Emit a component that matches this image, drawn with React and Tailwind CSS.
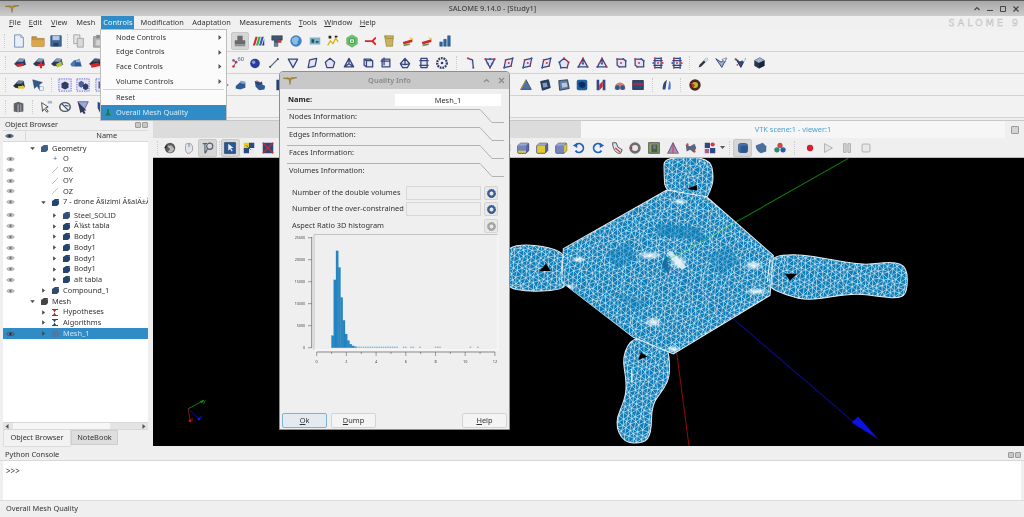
import React from "react";

const Logo = () => (
  <svg width="14" height="8" viewBox="0 0 14 8"><path d="M0 1.2 L6 2.2 L7 7.5 L8 2.2 L14 .6 L8.5 .6 L7 1.5 L5 .8z" fill="#b8942c" stroke="#6b5a20" strokeWidth=".4"/></svg>
);
const S = ({ children }) => <svg viewBox="0 0 16 16" width="14" height="14">{children}</svg>;
const poly = (d, dots) => (
  <svg viewBox="-1 -1 18 18" width="14" height="14">
    <path d={d} fill="#d6daee" fillOpacity=".55" stroke="#36457e" strokeWidth="1.6" strokeLinejoin="round"/>
    {dots && dots.map((p, i) => <circle key={i} cx={p[0]} cy={p[1]} r="1.3" fill={i % 2 ? "#3f55b4" : "#d8344a"}/>)}
  </svg>
);
const cube = (a, b, c, extra) => (
  <S>
    <path d="M3 5 L9 2 L14 5 L14 11 L8 14 L3 11z" fill={a} stroke="#2a3346" strokeWidth=".7"/>
    <path d="M3 5 L8 8 L14 5 L9 2z" fill={b}/>
    <path d="M8 8 L8 14 L14 11 L14 5z" fill={c}/>
    {extra}
  </S>
);
const house = (extra, top = "#7ea0c8", body = "#243c62") => (
  <S>
    <path d="M1.5 9 L7.5 3 L13 3.5 L14.5 10 L8 11.5 L4 11z" fill={body} stroke="#18263e" strokeWidth=".4"/>
    <path d="M5 6.5 L7.5 3 L13 3.5 L11.5 6.5z" fill={top}/>
    {extra}
  </S>
);
const face = (kind) => (
  <S>
    <path d="M5 2.5h8.5a1 1 0 0 1 1 1v7.5l-3 3H3a1 1 0 0 1-1-1V5.5z" fill="#5a68a8" stroke="#2a3058" strokeWidth=".8"/>
    <path d="M2.4 5.5h9v8h-9z" fill={kind === "f" ? "#e2c92c" : "#7684bc"}/>
    {kind === "b" && <path d="M2.4 11h9v2.5h-9z" fill="#e2c92c"/>}
    {kind === "r" && <path d="M11.5 5.5l3-2.5v8l-3 2.5z" fill="#e2c92c"/>}
    {kind === "l" && <path d="M2.4 5.5h4v8h-4z" fill="#e2c92c"/>}
    <path d="M5 2.5h9l-3 3H2z" fill="#9aa6d4"/>
  </S>
);
const dash = (inner) => (
  <S>
    <rect x="1" y="1" width="14" height="14" fill="#e4e4f6" stroke="#5a5fc8" strokeWidth="1" strokeDasharray="1.5 1.2"/>
    {inner}
  </S>
);
const ICONS = {
  doc: <S><path d="M3 1h7l3 3v11H3z" fill="#e8effa" stroke="#6f86a8"/><path d="M10 1v3h3" fill="#c6d2e6" stroke="#6f86a8" strokeWidth=".6"/></S>,
  folder: <S><path d="M1 3h5l1 2h8v9H1z" fill="#c9923c" stroke="#a97a2e" strokeWidth=".8"/><path d="M1 7h14v7H1z" fill="#dba650"/></S>,
  save: <S><path d="M2 2h12v12H2z" fill="#41689f" stroke="#2b4776" strokeWidth=".8"/><path d="M4 2h8v5H4z" fill="#b8c8de"/><path d="M5 10h6v4H5z" fill="#26406b"/></S>,
  copy: <S><path d="M2 1h7v10H2z" fill="#e4e4e4" stroke="#a0a0a0"/><path d="M6 5h7v10H6z" fill="#d8d8d8" stroke="#a0a0a0"/></S>,
  paste: <S><path d="M3 3h10v12H3z" fill="#b4b4b4" stroke="#8b8b8b"/><path d="M6 1h4v4H6z" fill="#8a8a8a"/><path d="M6 7h6v6H6z" fill="#d4d4d4"/></S>,
  shade: <S><path d="M5 2h6v5h3v5H2V7h3z" fill="#6a6a6a"/><path d="M2 12h12v2H2z" fill="#8d8d8d"/></S>,
  rainbow: <S><path d="M1 13L4 3h2.5l-3 10z" fill="#d8252c"/><path d="M4.5 13L7.5 3H10L7 13z" fill="#3aa83c"/><path d="M8 13L11 3h2.5l-3 10z" fill="#2f56c8"/><path d="M11.5 13L14 5v8z" fill="#24358c"/></S>,
  blocks: <S><path d="M2 2h12v5H9v7H5V7H2z" fill="#3c5570" stroke="#222f40" strokeWidth=".6"/><path d="M9 7h4v3H9z" fill="#b43838"/><path d="M5 10h4v4H5z" fill="#6a7f96"/></S>,
  globe: <S><circle cx="8" cy="8" r="6.5" fill="#3c83c6"/><path d="M4 5c3-3 6-2 7 0s-2 3-1 5-4 3-5 1-3-4-1-6z" fill="#8fbbe2"/></S>,
  boxsm: <S><path d="M2 4h12v8H2z" fill="#7fb2c6"/><path d="M4 6h3v4H4zM9 8h3v2H9z" fill="#1e5068"/></S>,
  graph: <S><path d="M2 13l3-5 3 3 3-6 3 4" fill="none" stroke="#d6b818" strokeWidth="1.6"/><path d="M3 2h3v3H3zM10 2h3v2h-3z" fill="#222"/></S>,
  green: <S><path d="M8 1l6 3.5v7L8 15l-6-3.5v-7z" fill="#6cc46c" stroke="#3c9c4c" strokeWidth=".6"/><path d="M5 5.5h6v5H5z" fill="#e8f4e8" stroke="#2f8c3c"/><path d="M7 7h2v2H7z" fill="#5bb85b"/></S>,
  red: <S><path d="M1 7h8l4-4 1 2-3 3 3 3-1 2-4-4H1z" fill="#e0202c"/></S>,
  scroll: <S><path d="M3 2h10l-1 12H5z" fill="#c8b45a" stroke="#8e7b2c" strokeWidth=".7"/><path d="M3 2l2 3h8" fill="none" stroke="#8e7b2c" strokeWidth=".7"/></S>,
  flag: <S><path d="M2 9l11-3v3L3 12z" fill="#c82a30"/><path d="M10 3l2 2 2-1-1 2-3-1z" fill="#e6c62c"/><path d="M3 12l7-1.5v2L3 14z" fill="#7a8a4a"/></S>,
  bars: <S><path d="M2 9h3v5H2zM6.5 6h3v8h-3zM11 2h3v12h-3z" fill="#2f67a8" stroke="#1f4474" strokeWidth=".5"/></S>,
  a1: house(<path d="M4 9.5l8-1.5 .5 3-8 1.5z" fill="#d8252c"/>),
  a2: house(<path d="M9 6.5h2.5V9H14v2.5h-2.5V14H9v-2.5H6.5V9H9z" fill="#d8252c"/>),
  a3: house(<path d="M7 9l6-3 1 5-6 2z" fill="#b8c428"/>),
  a4: <S><path d="M1.5 9L6 4.5l2 1V12H3z" fill="#4a78b0"/><path d="M7 5l5-2 2.5 9-7.5 0z" fill="#2f5a94"/><path d="M8 4.5L12 3l1 4-5 0z" fill="#8fb2d8"/></S>,
  a5: house(<path d="M3 9l9-1.5 2 4-10 2z" fill="#d8252c"/>, "#4a5f7c", "#1d2c44"),
  num: <S><circle cx="4" cy="12" r="1.5" fill="#d8344a"/><circle cx="7" cy="7" r="1.5" fill="#d8344a"/><circle cx="4" cy="5" r="1.5" fill="#8a5ab0"/><path d="M4 12L7 7 4 5" stroke="#555" fill="none"/><text x="8.5" y="6" fontSize="6.5" fill="#3a4a9a" fontFamily="Noto Sans">60</text></S>,
  sphere: <S><circle cx="8" cy="8.5" r="5.5" fill="#2a3c9c"/><circle cx="6.5" cy="7" r="2" fill="#8a9cdc"/></S>,
  line: <S><path d="M3 13L13 3" stroke="#5a6d88" strokeWidth="1.6"/><path d="M3 13l1-1M12 4l1-1" stroke="#222" strokeWidth="1.8"/></S>,
  tri: poly("M2 3h12L8 14z"),
  quad: poly("M5 4l9-2-2 10-9 2z"),
  pent: poly("M8 2l6 5-2 7H4L2 7z"),
  tet: poly("M8 2l6 11H2zM8 2v7M2 13l6-4 6 4"),
  hex1: poly("M3 3h8l3 2v8H6l-3-2zM3 3l3 2h8M6 5v8"),
  hex2: poly("M3 3h10v10H3zM5.5 1v10M1 5.5h12"),
  prism: poly("M8 2l6 7-3 5H5L2 9zM8 2v8M2 9l6 1 6-1"),
  barrel: poly("M4 2h8v12H4zM2 5h12M2 11h12"),
  gear: <S><circle cx="8" cy="8" r="5.5" fill="none" stroke="#2f3c6e" strokeWidth="2.6" strokeDasharray="2 1"/><circle cx="8" cy="8" r="1.5" fill="#2f3c6e"/></S>,
  d1: poly("M4 2l6 2 1 10", [[4, 2], [11, 14]]),
  d2: poly("M2 3h12L8 14z", [[2, 3], [8, 3], [14, 3], [11, 8.5], [8, 14], [5, 8.5]]),
  d3: poly("M5 4l9-2-2 10-9 2z", [[5, 4], [14, 2], [12, 12], [3, 14], [9, 8]]),
  d4: poly("M8 2l6 5-2 7H4L2 7z", [[8, 2], [2, 7], [14, 7], [4, 14], [12, 14]]),
  d5: poly("M8 2l6 11H2zM8 2v7", [[8, 2], [2, 13], [14, 13], [8, 9], [5, 8]]),
  d6: poly("M3 3h8l3 2v8H6l-3-2z", [[3, 3], [14, 5], [6, 13], [11, 3], [8, 8]]),
  d7: poly("M4 2h8v12H4zM2 5h12M2 11h12", [[4, 2], [12, 2], [4, 14], [12, 14], [8, 8], [2, 8], [14, 8]]),
  pen: <S><path d="M3 13l3-1 8-8-2-2-8 8z" fill="#2c3644"/><path d="M12 2l2 2-3 3-2-2z" fill="#d8dce2"/></S>,
  v1: <S><path d="M2 3l6 4 6-4-5 10z" fill="#9aaed0" stroke="#2f3c6e"/><path d="M9 4l5-2-1 5z" fill="#e8ecf4" stroke="#2f3c6e" strokeWidth=".5"/></S>,
  v2: <S><path d="M3 3l5 4 6-4-5 10z" fill="#2f4a86" stroke="#1f2c50"/><circle cx="3" cy="4" r="1.2" fill="#d8344a"/><circle cx="5" cy="10" r="1" fill="#d8344a"/><path d="M9 4l5-2-1 5z" fill="#e8ecf4"/></S>,
  v3: cube("#27384e", "#9fb3cc", "#1a2536"),
  m1: house(<path d="M7 9h5l-1-2 4 3.5-4 3.5 1-2H7z" fill="#e2c92c"/>, "#6a7f9c", "#1d2c44"),
  m2: <S><path d="M2 2l11 3-4 3 3 5-2 1-3-5-3 3z" fill="#2f5a8c" stroke="#1c3658" strokeWidth=".5"/><rect x="10" y="10" width="4.5" height="4.5" fill="#eef2f8" stroke="#8a98b0" strokeWidth=".6"/></S>,
  m3: dash(<path d="M4 6l4-2 4 2v5l-4 2-4-2z" fill="#2e4062"/>),
  m4: dash(<g><path d="M3 5l3-2 3 2v4l-3 2-3-2z" fill="#4a5fa0"/><path d="M8 8l3-2 3 2v4l-3 2-3-2z" fill="#2e4062"/></g>),
  tt: dash(<path d="M4 4h8v8H4z" fill="#4a5fa0"/>),
  b1: <S><path d="M2 9l6-5 5 1v6l-6 2-5-1z" fill="#2f5a96"/><path d="M6 5l2-2 5 1-1 3z" fill="#7fa4d0"/></S>,
  b2: <S><path d="M2 4l4 1 8 4-1 4-6 1-4-4z" fill="#2f5a96"/><path d="M2 3l6 2 2-1 1 3-6 1z" fill="#26406e"/><path d="M4 3l6 3" stroke="#b04060" strokeWidth=".8"/></S>,
  ob: <S><path d="M5 2h6v12H5z" fill="#2e4470"/></S>,
  r0: <S><path d="M2 8h12" stroke="#d8252c" strokeWidth="1.4"/></S>,
  pt: <S><path d="M4 4h9l-2 9H2z" fill="#2f4a86"/><path d="M4 4l-2 9" stroke="#d8344a" strokeWidth="1.4"/></S>,
  r1: <S><path d="M8 2l6 11H2z" fill="#4f70a8" stroke="#2e4470"/><path d="M8 2L2 13" stroke="#d0a818"/></S>,
  r2: <S><path d="M3 4l9-2 2 9-9 3z" fill="#2c3f62" stroke="#1f2f50"/><path d="M5 6l5-1 1 5-5 1z" fill="#7f9cc4"/></S>,
  r3: <S><path d="M2 3l10-1 2 10-11 2z" fill="#5e7ca6" stroke="#27384e"/><path d="M5 6l6-1 1 5-6 1z" fill="#b6c8de"/></S>,
  r4: <S><rect x="2" y="2" width="12" height="12" rx="2" fill="#1e5ea6"/><path d="M4 6c3-3 7-2 8 1s-4 6-7 3z" fill="#0f2d56"/></S>,
  r5: <S><path d="M3 2h3v12H3zM10 2h3v12h-3z" fill="#2f4a86"/><path d="M6 8l4-5v7l-4 4z" fill="#c82a30"/></S>,
  r6: <S><path d="M2 11a6 6 0 0 1 12 0v2H2z" fill="#d07c78"/><circle cx="5" cy="11" r="2.6" fill="#2e5a8a"/><circle cx="11" cy="11" r="2.6" fill="#2e5a8a"/></S>,
  r7: <S><rect x="2" y="3" width="12" height="10" fill="#2e4a78" stroke="#1c2c48"/><path d="M2 7h12" stroke="#d8252c" strokeWidth="1.4"/></S>,
  r8: <S><path d="M3 13C3 3 9 2 8 3s-1 8-2 10z" fill="#2e4a78"/><path d="M9 13c1-5 1-8 2-10 2 3 1 7 1 10z" fill="#4d7ac0"/></S>,
  r9: <S><circle cx="8" cy="8" r="6.5" fill="#4a2622"/><circle cx="8" cy="8" r="3.5" fill="#b7bb2a"/><path d="M2 5l6 3-2 3z" fill="#d82020"/></S>,
  w1: <S><path d="M2 4l5-2 6 2v9l-6 1-5-1z" fill="#5e6268"/><path d="M7 5v9" stroke="#c4c4c4" strokeWidth="1"/><path d="M10 5v8" stroke="#c4c4c4" strokeWidth=".8"/></S>,
  w2: <S><path d="M3 3l1 10 2-3 3 4 1.5-1-3-4 3-1z" fill="#f4f4f4" stroke="#2c2c2c" strokeWidth=".9"/><rect x="10" y="1" width="5" height="3" fill="#a8b4d0"/></S>,
  w3: <S><ellipse cx="8" cy="8" rx="6" ry="5" fill="none" stroke="#555" strokeWidth="1.7"/><path d="M4 4l8 8M8 6l4 1" stroke="#2f5a8c" strokeWidth="1.4"/></S>,
  w4: <S><path d="M2 2h12L8 14z" fill="#8fb0d0" stroke="#9a3aa8" strokeWidth="1"/><path d="M2 2l10 10-3 0 2 3-2 1-2-3-2 2z" fill="#2f3a5c"/></S>,
  w5: <S><path d="M3 2l8 4-4 2 1 6-2 1-3-6z" fill="#2f4a86"/></S>,
  f1: <S><circle cx="8" cy="8" r="6" fill="#5a5a5a"/><path d="M4 5h6l3 4-3 4H5l3-4z" fill="#b8b8b8"/><path d="M2 8l3-3" stroke="#222" strokeWidth="1.4"/></S>,
  f2: <S><path d="M5 3h5l2 3v5l-3 3H6l-2-3V5z" fill="#e4e4e4" stroke="#9a9a9a"/><path d="M8 3v4" stroke="#5a86b8"/></S>,
  f3: <S><circle cx="10" cy="6" r="3.5" fill="none" stroke="#55606e" strokeWidth="1.3"/><path d="M2 3h5M4.5 3v11M7.5 8.5L5 14" stroke="#55606e" strokeWidth="1.3"/></S>,
  f4: <S><rect x="2" y="2" width="12" height="12" fill="#2a5a98" stroke="#1c3c66"/><path d="M6 3v8l2-2 2 3 1-1-2-3h3z" fill="#eee"/></S>,
  f5: <S><rect x="2" y="2" width="6" height="6" fill="#e2c92c"/><rect x="8" y="2" width="6" height="6" fill="#2a4a86"/><rect x="2" y="8" width="6" height="6" fill="#2a4a86"/><rect x="8" y="8" width="6" height="6" fill="#e8e8e8"/><path d="M5 5l5 5" stroke="#d8252c"/></S>,
  f6: <S><rect x="2" y="2" width="12" height="12" fill="#27497e"/><path d="M2 2l12 12M14 2L2 14" stroke="#d8252c" strokeWidth="1.5"/></S>,
  cl: face("l"),
  cb: face("b"),
  cf: face("f"),
  cr: face("r"),
  undo: <S><path d="M5 4a5 5 0 1 1-1 7" fill="none" stroke="#2260c0" strokeWidth="2"/><path d="M1 5l5-3v6z" fill="#2260c0"/></S>,
  redo: <S><path d="M11 4a5 5 0 1 0 1 7" fill="none" stroke="#2260c0" strokeWidth="2"/><path d="M15 5l-5-3v6z" fill="#2260c0"/></S>,
  t1: <S><path d="M3 2h4l2 5 5 3-2 4c-5 1-9-5-9-12z" fill="#dfe3e8" stroke="#3e4a5a"/><path d="M6 8l6 5" stroke="#d83030" strokeWidth="1.4"/></S>,
  t2: <S><circle cx="8" cy="8" r="6.5" fill="#6e6e6e"/><circle cx="8" cy="8" r="3.5" fill="#e8e8e8"/><path d="M2 8h3" stroke="#d82020" strokeWidth="1.3"/></S>,
  t3: <S><rect x="2" y="2" width="12" height="12" fill="#8ba26c" stroke="#3c4a34"/><path d="M5 3v10h7V4H5" fill="#43624a"/><path d="M7 5h3v4H7z" fill="#8a6aa8"/></S>,
  t4: <S><path d="M8 2l6 12H2z" fill="#a78cc4" stroke="#3a4a86"/><path d="M1 14h14" stroke="#d8a020"/><path d="M8 2v12" stroke="#d83030"/></S>,
  t5: <S><path d="M2 4l5 2 5-3 2 5-3 5-4-3-4 2z" fill="#556880"/><circle cx="4" cy="4" r="1.3" fill="#d8344a"/><circle cx="12" cy="12" r="1.3" fill="#d8344a"/></S>,
  t6: <S><rect x="2" y="2" width="6" height="6" fill="#2a4a86"/><rect x="8" y="8" width="6" height="6" fill="#2a4a86"/><rect x="2" y="9" width="5" height="5" fill="#a85c90"/><circle cx="11" cy="4" r="2.4" fill="#d8344a"/></S>,
  ps: <S><rect x="3" y="3" width="10" height="10" rx="2" fill="#4a78b4" stroke="#27497e"/><rect x="5" y="5" width="8" height="8" rx="1" fill="#2d5690"/></S>,
  pz: <S><path d="M2 5l8-3 4 4v6l-6 2c-4-2-6-5-6-9z" fill="#4a6e9e"/></S>,
  gl: <S><circle cx="8" cy="5" r="3" fill="#c64a48"/><circle cx="4.5" cy="10" r="3" fill="#2f8a6e"/><circle cx="11.5" cy="10" r="3" fill="#2a5ca8"/></S>,
  rec: <S><circle cx="8" cy="8" r="3.6" fill="#d81c2c"/></S>,
  play: <S><path d="M4 3l9 5-9 5z" fill="#e4e4e4" stroke="#aaa"/></S>,
  pause: <S><path d="M4 3h3v10H4zM9 3h3v10H9z" fill="#d4d4d4" stroke="#aaa"/></S>,
  stop: <S><rect x="3.5" y="3.5" width="9" height="9" rx="1" fill="#e8e8e8" stroke="#aaa"/></S>,
};

const Slot = ({ k, on }) => (
  <div className={`w-[18.7px] h-[18px] flex items-center justify-center shrink-0 ${on ? "bg-[#d6d6d6] rounded-[2px] border border-[#c8c8c8]" : ""}`}>{ICONS[k]}</div>
);
const Sep = ({ w }) => (
  <div className="shrink-0 flex justify-center" style={{ width: w }}>
    <div className="h-[14px] border-l border-dotted border-[#cccccc]" />
  </div>
);
const Gap = ({ w }) => <div className="shrink-0" style={{ width: w }} />;
const Items = ({ list }) =>
  list.map((it, i) => {
    if (typeof it === "number") return <Gap key={i} w={it} />;
    if (it[0] === "|") return <Sep key={i} w={Number(it.slice(1))} />;
    if (it[0] === "*") return <Slot key={i} k={it.slice(1)} on />;
    return <Slot key={i} k={it} />;
  });

const R1 = ["doc", "folder", "save", "|4", "copy", "paste", 123.5, "*shade", "rainbow", "blocks", "globe", "boxsm", "graph", "green", "red", "scroll", "flag", "flag", "bars"];
const R2 = ["a1", "a2", "a3", "a4", "a5", 123.5, "num", "sphere", "line", "tri", "quad", "pent", "tet", "hex1", "hex2", "prism", "barrel", "gear", "|10", "d1", "d2", "d3", "d3", "d3", "d4", "d5", "d5", "d6", "d6", "d7", "d7", "|7.5", "pen", "v1", "v2", "v3"];
const R3 = ["m1", "m2", "|8", "m3", "m4", "tt", 102, "r0", "b1", "b2", "ob", "pt", 210, "r1", "r2", "r3", "r4", "r5", "r6", "r7", "|10", "r8", "|9", "r9"];
const R4 = ["w1", "|8", "w2", "w3", "w4", "w5"];
const VT = ["f1", "f2", "*f3", "|4", "*f4", "f5", "f6", 218, "cl", "cb", "cf", "cr", "undo", "redo", "t1", "t2", "t3", "t4", "t5", "t6"];

const Toolbar = ({ list, pl }) => (
  <div className="h-[22px] flex items-center border-b border-[#d2d2d2] bg-[#f2f2f2]">
    <Sep w={pl} />
    <Items list={list} />
  </div>
);

const U = ({ t }) => <span><span className="underline">{t[0]}</span>{t.slice(1)}</span>;
const Eye = ({ dark }) => (
  <svg width="9" height="6" viewBox="0 0 9 6"><path d="M.5 3C2 .8 7 .8 8.5 3 7 5.2 2 5.2.5 3z" fill={dark ? "#6a7a90" : "#cfcfcf"} stroke={dark ? "#2c3a4e" : "#8d8d8d"} strokeWidth=".6"/><circle cx="4.5" cy="3" r="1.2" fill={dark ? "#1c2a3e" : "#6f6f6f"}/></svg>
);
const Arrow = ({ open }) => (
  <svg width="5" height="5" viewBox="0 0 5 5">{open ? <path d="M.3 1.2h4.400L2.5 4z" fill="#444"/> : <path d="M1.2.3v4.400L4 2.5z" fill="#444"/>}</svg>
);
const Box = ({ c = "#24466e" }) => (
  <svg width="9" height="9" viewBox="0 0 9 9"><path d="M1 3l3-2h4v5L6 8H1z" fill={c}/><path d="M6 3h2L8 1 6 3v5z" fill="#5c7ca6"/></svg>
);
const TreeRow = ({ eye, depth, open, arrow = true, icon, label, sel, mt }) => (
  <div className={`h-[10.75px] flex items-center ${sel ? "bg-[#308cc6] text-[#cfe6f6]" : ""}`} style={{ marginTop: mt }}>
    <div className="w-[18px] pl-[3px] flex items-center shrink-0">{eye && <Eye dark={sel} />}</div>
    <div className="shrink-0 flex items-center justify-end" style={{ width: depth }}>
      {arrow && <Arrow open={open} />}
    </div>
    <div className="w-[13px] ml-[2.5px] flex justify-center shrink-0">{icon}</div>
    <div className="ml-[1.5px] whitespace-nowrap">{label}</div>
  </div>
);
const Line = () => <svg width="8" height="8" viewBox="0 0 8 8"><path d="M1 7L7 1" stroke="#a8b0ba" strokeWidth=".8"/></svg>;
const Hyp = ({ c }) => <svg width="8" height="9" viewBox="0 0 8 9"><path d="M1 1h6v1H5L3.5 4.5 5 7h2v1H1V7h1l1.5-2.5L2 2H1z" fill={c}/></svg>;

function buildMesh() {
  let s = 12345;
  const rnd = () => ((s = (s * 16807) % 2147483647) / 2147483647 - 0.5);
  const a = [14, -8], b = [12, 9.5];
  const pts = {};
  const P = (i, j) => {
    const key = i + "," + j;
    if (!pts[key]) pts[key] = [470 + i * a[0] + j * b[0] + rnd() * 8, 320 + i * a[1] + j * b[1] + rnd() * 8];
    return pts[key];
  };
  let d = "";
  const f = (p) => p[0].toFixed(0) + " " + p[1].toFixed(0);
  for (let i = -80; i < 80; i++) {
    for (let j = -80; j < 80; j++) {
      const p = P(i, j);
      if (p[0] < -30 || p[0] > 1230 || p[1] < -30 || p[1] > 890) continue;
      d += "M" + f(P(i + 1, j)) + "L" + f(p) + "L" + f(P(i, j + 1)) + "L" + f(P(i + 1, j));
    }
  }
  return d;
}
const smooth = (pts) => {
  const n = pts.length;
  const mid = (p, q) => [(p[0] + q[0]) / 2, (p[1] + q[1]) / 2];
  let m = mid(pts[n - 1], pts[0]);
  let d = `M${m[0]} ${m[1]}`;
  for (let i = 0; i < n; i++) {
    const q = mid(pts[i], pts[(i + 1) % n]);
    d += `Q${pts[i][0]} ${pts[i][1]} ${q[0]} ${q[1]}`;
  }
  return d + "Z";
};
const PLATE = "M160 280L470 105L590 125L790 300L780 420L490 595L370 545L155 380Z";
const RIGHT = smooth([[775, 305], [860, 295], [960, 312], [1060, 330], [1150, 318], [1192, 335], [1192, 410], [1170, 428], [1120, 425], [1030, 412], [900, 436], [830, 420], [765, 390]]);
const LEFT = smooth([[-20, 278], [60, 265], [170, 290], [150, 345], [180, 400], [60, 410], [-20, 395]]);
const TOP = smooth([[462, 6], [600, 6], [612, 70], [600, 110], [585, 135], [465, 115], [462, 50]]);
const BOTTOM = smooth([[372, 540], [472, 555], [482, 655], [462, 700], [425, 745], [424, 835], [400, 862], [340, 860], [314, 800], [345, 730], [350, 680], [336, 600]]);

const Viewport = () => {
  const mesh = React.useMemo(buildMesh, []);
  return (
    <svg className="block w-full h-full" viewBox="153 158 871 287" preserveAspectRatio="none">
      <rect x="153" y="158" width="871" height="287" fill="#000"/>
      <g transform="translate(510 155) scale(.33333)">
        <defs>
          <clipPath id="bodyClip"><path d={PLATE}/><path d={RIGHT}/><path d={LEFT}/><path d={TOP}/><path d={BOTTOM}/></clipPath>
          <radialGradient id="glow"><stop offset="0" stopColor="#fff" stopOpacity=".95"/><stop offset=".55" stopColor="#fff" stopOpacity=".5"/><stop offset="1" stopColor="#fff" stopOpacity="0"/></radialGradient>
        </defs>
        <path d="M500 590L537 870" stroke="#8a0a0a" strokeWidth="3.2"/>
        <path d="M670 205L1015 10" stroke="#0a7a0a" strokeWidth="3.2"/>
        <path d="M670 490L1050 815" stroke="#0a0a90" strokeWidth="3.2"/>
        <path d="M1025 800L1045 782L1105 850z" fill="#0a14e0"/>
        {[LEFT, RIGHT, TOP, BOTTOM, PLATE].map((d, i) => <path key={i} d={d} fill="#0b7db8" stroke="#dfe8ee" strokeWidth="3"/>)}
        <g clipPath="url(#bodyClip)">
          <path d={mesh} fill="none" stroke="#ffffff" strokeWidth="1.8" opacity=".92"/>
          <path d="M165 385L370 545L378 560L340 548L160 405z" fill="#0b7db8" opacity=".75"/>
          <path d="M440 205L560 215L600 260L520 250L440 240z" fill="#0b7db8" opacity=".55"/>
          <path d="M290 290L360 265L380 310L320 340z" fill="#0b7db8" opacity=".45"/>
          <path d="M590 300L660 275L690 320L630 360z" fill="#0b7db8" opacity=".4"/>
          <path d="M300 405L420 440L380 470z" fill="#0b7db8" opacity=".35"/>
          {[[510, 140, 24, 11], [205, 312, 24, 10], [175, 395, 24, 10], [730, 330, 30, 16], [740, 408, 38, 12], [430, 500, 30, 16], [490, 580, 22, 12], [420, 300, 40, 14], [505, 320, 28, 24]].map((e, i) => (
            <ellipse key={i} cx={e[0]} cy={e[1]} rx={e[2]} ry={e[3]} fill="url(#glow)"/>
          ))}
        </g>
        <path d="M455 328L470 300L478 362z" fill="#0f6fa8"/>
        <path d="M482 285L530 335L515 342L470 294z" fill="#e8f4fa" opacity=".8"/>
        <path d="M88 347L122 347L108 325zM825 355L862 355L840 376zM530 102L560 90L562 106zM385 612L412 603L393 590z" fill="#000"/>
        <path d="M470 315L672 205" stroke="#4de04d" strokeWidth="1.6"/>
        <path d="M472 328L668 488" stroke="#3a4ad0" strokeWidth="1.4"/>
        <path d="M470 318L475 360" stroke="#c04040" strokeWidth="1.4"/>
        <path d="M780 310L772 380" stroke="#f0f4f8" strokeWidth="3"/>
        <path d="M365 640V680" stroke="#f4f8fa" strokeWidth="3"/>
      </g>
      <g strokeWidth=".8" fill="none">
        <path d="M188 408L203 400" stroke="#0fa00f"/>
        <path d="M188 408L190 419" stroke="#b01010"/>
        <path d="M188 408L199 418" stroke="#1010e0"/>
      </g>
      <path d="M200 400.5L204 399L202 402.5z" fill="#0fa00f"/>
      <circle cx="190" cy="420" r="1.4" fill="#d01010"/>
      <circle cx="199" cy="418" r="1.4" fill="#1818f0"/>
      <text x="203" y="402" fontSize="5" fill="#10a010" fontFamily="Noto Sans">y</text>
      <text x="190.5" y="420" fontSize="5" fill="#c01010" fontFamily="Noto Sans">x</text>
      <text x="200" y="418" fontSize="5" fill="#2020f0" fontFamily="Noto Sans">z</text>
    </svg>
  );
};

const GroupHead = ({ t }) => (
  <div className="relative h-[18px] text-[#333]">
    <svg className="absolute left-[-1px] top-0" width="217" height="14" viewBox="0 0 217 14">
      <path d="M0 .5H193L205 13.5H217" fill="none" stroke="#a2a2a2" strokeWidth=".8"/>
    </svg>
    <div className="absolute left-[1px] top-[3.5px] whitespace-nowrap">{t}</div>
  </div>
);
const Gear = ({ off }) => (
  <div className="w-[14px] h-[14px] bg-[#e8e8e8] border border-[#d4d4d4] rounded-[2px] flex items-center justify-center">
    <svg width="9" height="9" viewBox="0 0 10 10"><circle cx="5" cy="5" r="3.4" fill="none" stroke={off ? "#a4a4a4" : "#3c62a0"} strokeWidth="2.4"/><circle cx="5" cy="5" r="4.4" fill="none" stroke={off ? "#9a9a9a" : "#1d3557"} strokeWidth="1" strokeDasharray="1.2 1"/></svg>
  </div>
);
const StatRow = ({ t, gear = true, input = true, mt }) => (
  <div className="flex items-center h-[14px]" style={{ marginTop: mt }}>
    <div className="w-[118px] whitespace-nowrap pl-[4px] text-[#333]">{t}</div>
    {input ? <div className="w-[75px] h-[14px] border border-[#d8d8d8] bg-[#efefef]" /> : <div className="w-[75px]" />}
    <div className="ml-[3px]">{gear === "off" ? <Gear off /> : <Gear />}</div>
  </div>
);

const BARS = [2700, 15400, 22000, 18200, 11400, 6200, 3100, 1600, 800, 400, 200];
const Chart = () => {
  const X = (v) => 36.7 + v * 14.85;
  const Y = (v) => 113.7 - (v / 25000) * 110;
  const small = [];
  for (let x = 2.5; x < 5.5; x += 0.15) small.push(x);
  [5.8, 5.95, 6.3, 6.45, 6.9, 7.95, 8.1, 8.25, 10.3, 10.8].forEach((x) => small.push(x));
  return (
    <svg width="231" height="135" viewBox="0 0 231 135" className="block">
      <path d="M34 116V.5H218" fill="none" stroke="#b8b8b8" strokeWidth=".8"/>
      <path d="M34 116H218V.5" fill="none" stroke="#fafafa" strokeWidth="1"/>
      {BARS.map((v, i) => (
        <rect key={i} x={51.5 + i * 2.25} y={Y(v)} width="2.25" height={Y(0) - Y(v)} fill="#2288c8" stroke="#1a6fa6" strokeWidth=".25"/>
      ))}
      {small.map((x, i) => <rect key={i} x={X(x)} y={Y(0) - 1} width="1.6" height="1" fill="#5aa8d8"/>)}
      <path d="M31.7 3V114" stroke="#444" strokeWidth=".6"/>
      {[0, 5000, 10000, 15000, 20000, 25000].map((v) => (
        <g key={v}>
          <path d={`M28 ${Y(v)}H31.7`} stroke="#444" strokeWidth=".5"/>
          <text x="25" y={Y(v) + 1.2} fontSize="3.6" textAnchor="end" fill="#444" fontFamily="Noto Sans">{v}</text>
        </g>
      ))}
      <path d="M36.7 118H215" stroke="#444" strokeWidth=".6"/>
      {[0, 2, 4, 6, 8, 10, 12].map((v) => (
        <g key={v}>
          <path d={`M${X(v)} 118V122`} stroke="#444" strokeWidth=".5"/>
          <text x={X(v)} y="128.5" fontSize="3.8" textAnchor="middle" fill="#444" fontFamily="Noto Sans">{v}</text>
        </g>
      ))}
      {[1, 3, 5, 7, 9, 11].map((v) => <path key={v} d={`M${X(v)} 118V120`} stroke="#444" strokeWidth=".5"/>)}
    </svg>
  );
};

const Btn = ({ children, w, on }) => (
  <div className={`h-[15px] flex items-center justify-center rounded-[2px] border ${on ? "border-[#7fb2d2] bg-[#e4ebf0]" : "border-[#d4d4d4] bg-[#f4f4f4]"} text-[#333]`} style={{ width: w }}>{children}</div>
);
const Dialog = () => (
  <div className="absolute left-[279px] top-[71px] w-[231px] h-[359px] bg-[#efefef] border border-[#8e8e8e] rounded-t-[4px] overflow-hidden flex flex-col">
    <div className="h-[17px] shrink-0 bg-[#c8c8c8] flex items-center relative">
      <div className="pl-[3px]"><Logo /></div>
      <div className="absolute inset-x-0 pr-[10px] text-center font-semibold text-[#888]">Quality Info</div>
      <div className="ml-auto flex gap-[8px] pr-[4px] items-center">
        <svg width="7" height="5" viewBox="0 0 7 5"><path d="M1 4l2.5-2.5L6 4" stroke="#888" fill="none" strokeWidth="1.1"/></svg>
        <svg width="7" height="7" viewBox="0 0 7 7"><path d="M1 1l5 5M6 1L1 6" stroke="#888" strokeWidth="1.1"/></svg>
      </div>
    </div>
    <div className="px-[8px] flex-1 flex flex-col">
      <div className="flex items-center h-[12px] mt-[5px]">
        <div className="font-bold text-[#222] w-[108px]">Name:</div>
        <div className="w-[107px] h-[12px] bg-white text-center text-[#333] leading-[12px]">Mesh_1</div>
      </div>
      <div className="mt-[3px]">
        <GroupHead t="Nodes Information:" />
        <GroupHead t="Edges Information:" />
        <GroupHead t="Faces Information:" />
        <GroupHead t="Volumes Information:" />
      </div>
      <StatRow t="Number of the double volumes" mt="5px" />
      <StatRow t="Number of the over-constrained" mt="2px" />
      <StatRow t="Aspect Ratio 3D histogram" input={false} gear="off" mt="3px" />
    </div>
    <div className="absolute left-0 top-[162px]"><Chart /></div>
    <div className="flex items-center px-[2px] h-[15px] shrink-0">
      <Btn w="45px" on><U t="Ok" /></Btn>
      <div className="ml-[4px]"><Btn w="45px"><U t="Dump" /></Btn></div>
      <div className="ml-auto"><Btn w="45px"><U t="Help" /></Btn></div>
    </div>
    <div className="h-[1px] shrink-0" />
  </div>
);

const MenuItem = ({ t, sub }) => (
  <div className="h-[14.7px] flex items-center pl-[15px] pr-[4px] text-[#333]">
    <span>{t}</span>
    {sub && <svg className="ml-auto" width="4" height="5" viewBox="0 0 4 5"><path d="M.5 0v5L3.5 2.5z" fill="#555"/></svg>}
  </div>
);
const Menu = () => (
  <div className="absolute left-[100px] top-[29px] w-[127px] h-[92px] bg-[#fbfbfb] border border-[#bdbdbd]">
    <MenuItem t="Node Controls" sub />
    <MenuItem t="Edge Controls" sub />
    <MenuItem t="Face Controls" sub />
    <MenuItem t="Volume Controls" sub />
    <div className="mx-[2px] border-t border-[#d4d4d4]" />
    <div className="h-[15px] flex items-center pl-[15px] text-[#333]">Reset</div>
    <div className="h-[15px] bg-[#308cc6] flex items-center text-[#d8ecf8]">
      <svg className="ml-[3px] mr-[4px]" width="8" height="8" viewBox="0 0 8 8"><path d="M1 7.5h6L5 5V1H3.5L3 5z" fill="#1e7a3a"/></svg>
      <span>Overall Mesh Quality</span>
    </div>
  </div>
);

export default function App() {
  return (
    <div className="relative w-[1024px] h-[517px] overflow-hidden bg-[#efefef] text-[7.4px] leading-none text-[#333] font-['Noto_Sans',sans-serif] flex flex-col blur-[0.35px]">
      <div className="h-[16px] shrink-0 bg-gradient-to-b from-[#a8a8a8] to-[#cdcdcd] border-t border-[#5a5a5a] flex items-center relative">
        <div className="pl-[5px]"><Logo /></div>
        <div className="absolute inset-x-0 pr-[39px] text-center font-medium text-[#444]">SALOME 9.14.0 - [Study1]</div>
        <div className="ml-auto flex items-center gap-[7px] pr-[5px]">
          <svg width="6" height="5" viewBox="0 0 6 5"><path d="M.5 4L3 1.5 5.5 4" stroke="#444" fill="none" strokeWidth="1.1"/></svg>
          <svg width="6" height="5" viewBox="0 0 6 5"><path d="M0 4.5H6" stroke="#444" strokeWidth="1.1"/></svg>
          <svg width="6" height="6" viewBox="0 0 6 6"><path d="M.5.5h5v5h-5z" fill="none" stroke="#444" strokeWidth="1"/></svg>
          <svg width="6" height="6" viewBox="0 0 6 6"><path d="M.5.5l5 5M5.5.5l-5 5" stroke="#444" strokeWidth="1.2"/></svg>
        </div>
      </div>
      <div className="h-[14px] shrink-0 bg-[#f0f0f0] flex items-stretch relative overflow-hidden">
        <div className="flex items-center pl-[9px] text-[#333] whitespace-nowrap">
          <U t="File" /><span className="ml-[8px]"><U t="Edit" /></span><span className="ml-[9px]"><U t="View" /></span><span className="ml-[9px]">Mesh</span>
          <span className="ml-[6px] px-[2px] h-[14px] flex items-center bg-[#308cc6] text-[#eef6fb]">Controls</span>
          <span className="ml-[6px]">Modification</span><span className="ml-[8.5px]">Adaptation</span><span className="ml-[8.5px]">Measurements</span>
          <span className="ml-[7.5px]"><U t="Tools" /></span><span className="ml-[7.5px]"><U t="Window" /></span><span className="ml-[7.5px]"><U t="Help" /></span>
        </div>
        <div className="ml-auto mr-[3px] flex items-center text-[9.5px] tracking-[3px] font-['DejaVu_Sans',sans-serif] text-transparent [-webkit-text-stroke:0.5px_#c0c0c0] whitespace-nowrap">SALOME 9</div>
      </div>
      <Toolbar list={R1} pl="9.6px" />
      <Toolbar list={R2} pl="10.5px" />
      <Toolbar list={R3} pl="10px" />
      <Toolbar list={R4} pl="10px" />

      <div className="flex-1 flex min-h-0">
        <div className="w-[153px] shrink-0 pl-[3px] pr-[5.5px] flex flex-col">
          <div className="h-[11px] mt-[1px] flex items-center pl-[2px]">
            <span>Object Browser</span>
            <span className="ml-auto flex gap-[1px]">
              <span className="w-[6px] h-[6px] bg-[#c8c8c8] border border-[#9a9a9a] rounded-[1px]" />
              <span className="w-[6px] h-[6px] bg-[#c8c8c8] border border-[#9a9a9a] rounded-[1px]" />
            </span>
          </div>
          <div className="h-[12px] bg-[#f0f0f0] border-y border-[#dadada] flex items-center">
            <div className="w-[23px] pl-[2px] border-r border-[#d8d8d8] h-full flex items-center"><Eye dark /></div>
            <div className="flex-1 text-center pl-[40px]">Name</div>
          </div>
          <div className="flex-1 bg-white min-h-0 overflow-hidden pt-[1px]">
            <TreeRow depth={14} open icon={<Box c="#3c5f8a" />} label="Geometry" />
            <TreeRow eye depth={25} arrow={false} icon={<span className="text-[#3c62a0]">+</span>} label="O" />
            <TreeRow eye depth={25} arrow={false} icon={<Line />} label="OX" />
            <TreeRow eye depth={25} arrow={false} icon={<Line />} label="OY" />
            <TreeRow eye depth={25} arrow={false} icon={<Line />} label="OZ" />
            <TreeRow eye depth={25} open icon={<Box />} label="7 - drone Ã§izimi Ã§alÄ±Åž" />
            <TreeRow eye depth={36} mt="2.5px" icon={<Box c="#33507c" />} label="Steel_SOLID" />
            <TreeRow eye depth={36} icon={<Box />} label="Ã¼st tabla" />
            <TreeRow eye depth={36} icon={<Box />} label="Body1" />
            <TreeRow eye depth={36} icon={<Box />} label="Body1" />
            <TreeRow eye depth={36} icon={<Box />} label="Body1" />
            <TreeRow eye depth={36} icon={<Box />} label="Body1" />
            <TreeRow eye depth={36} icon={<Box />} label="alt tabla" />
            <TreeRow eye depth={25} icon={<Box c="#2e4a6e" />} label="Compound_1" />
            <TreeRow depth={14} open icon={<Box c="#444" />} label="Mesh" />
            <TreeRow depth={25} icon={<Hyp c="#b02a2a" />} label="Hypotheses" />
            <TreeRow depth={25} icon={<Hyp c="#2a4a7a" />} label="Algorithms" />
            <TreeRow eye depth={25} icon={<Box c="#4a7aa6" />} label="Mesh_1" sel />
          </div>
          <div className="h-[8px] bg-[#e4e4e4] border-y border-[#d8d8d8] flex items-center shrink-0 justify-between px-[2px]">
            <svg width="4" height="5" viewBox="0 0 4 5"><path d="M3.5 0v5L.5 2.5z" fill="#555"/></svg>
            <div className="flex-1 mx-[4px] mr-[32px] h-full bg-[#f6f6f6]" />
            <svg width="4" height="5" viewBox="0 0 4 5"><path d="M.5 0v5l3-2.5z" fill="#555"/></svg>
          </div>
          <div className="h-[17px] flex items-start shrink-0 mb-[1px]">
            <div className="w-[68px] h-[17px] bg-[#f2f2f2] rounded-b-[2px] border-b border-x border-[#dcdcdc] flex items-center justify-center">Object Browser</div>
            <div className="w-[47px] h-[15px] bg-[#dedede] border border-[#cfcfcf] flex items-center justify-center">NoteBook</div>
          </div>
        </div>
        <div className="flex-1 flex flex-col min-w-0 mb-[2px]">
          <div className="h-[18px] mt-[2px] shrink-0 flex border-t border-[#c8c8c8]">
            <div className="w-[428px] bg-[#dcdcdc]" />
            <div className="w-[424px] bg-[#f6f6f6] flex items-center justify-center text-[#4a9fd0]">VTK scene:1 - viewer:1</div>
            <div className="flex-1 bg-[#efefef] flex items-center justify-center">
              <span className="w-[8px] h-[8px] bg-[#d4d4d4] border border-[#9a9a9a] rounded-[1px]" />
            </div>
          </div>
          <div className="h-[19px] shrink-0 flex items-center">
            <Sep w="8px" />
            <Items list={VT} />
            <svg className="ml-[1px]" width="5" height="3" viewBox="0 0 5 3"><path d="M0 0h5L2.5 3z" fill="#555"/></svg>
            <Sep w="8px" />
            <Items list={["*ps", "pz", "gl", "|11", "rec", "play", "pause", "stop"]} />
          </div>
          <div className="flex-1 min-h-0 border-t border-[#bcbcbc]"><Viewport /></div>
        </div>
      </div>

      <div className="h-[13px] shrink-0 flex items-end pb-[1.5px] pl-[5px] pr-[3px] border-b border-[#d8d8d8]">
        <span>Python Console</span>
        <span className="ml-auto flex gap-[1px] pb-[1px]">
          <span className="w-[6px] h-[6px] bg-[#c8c8c8] border border-[#9a9a9a] rounded-[1px]" />
          <span className="w-[6px] h-[6px] bg-[#c8c8c8] border border-[#9a9a9a] rounded-[1px]" />
        </span>
      </div>
      <div className="h-[39px] shrink-0 bg-white mx-[3px] pl-[3px] pt-[6px] text-[8px]">&gt;&gt;&gt;</div>
      <div className="h-[17px] shrink-0 flex items-center pl-[6px] border-t border-[#dcdcdc]">Overall Mesh Quality</div>

      <Menu />
      <Dialog />
    </div>
  );
}
